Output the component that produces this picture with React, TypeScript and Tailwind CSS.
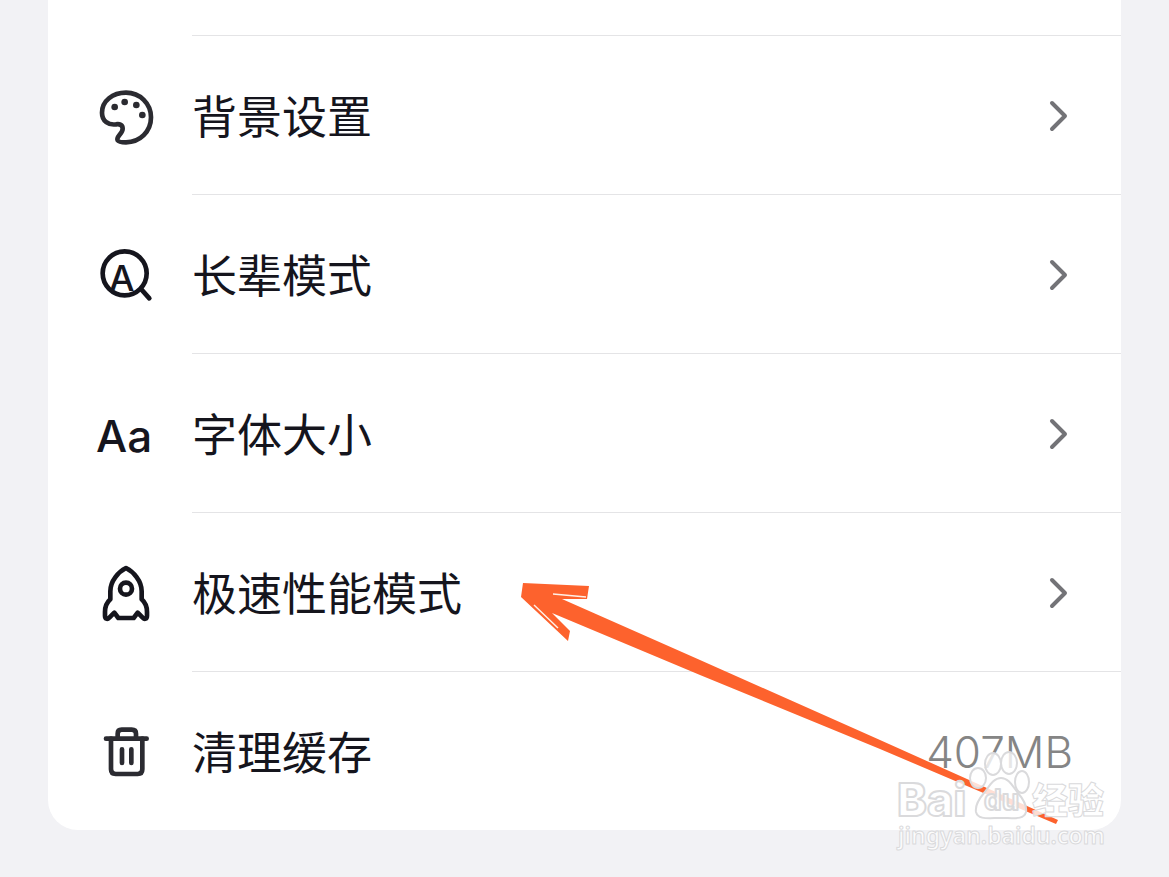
import type { ReactNode } from "react";

type SettingItem = {
  label: string;
  icon: ReactNode;
  value?: string;
};

const settings: SettingItem[] = [
  { label: "背景设置", icon: <IconPalette /> },
  { label: "长辈模式", icon: <IconElder /> },
  { label: "字体大小", icon: <IconFontSize /> },
  { label: "极速性能模式", icon: <IconRocket /> },
  { label: "清理缓存", icon: <IconTrash />, value: "407MB" },
];

export default function App() {
  return (
    <div className="min-h-screen bg-[#f2f2f5] pb-12 font-[Inter,'Noto_Sans_CJK_SC',sans-serif] text-[#15151d]">
      <main className="relative mx-12 rounded-b-[30px] bg-white pt-[35px]">
        <ul>
          {settings.map((item) => (
            <li key={item.label}>
              <SettingRow item={item} />
            </li>
          ))}
        </ul>
        <Arrow />
        <Watermark />
      </main>
    </div>
  );
}

function SettingRow({ item }: { item: SettingItem }) {
  return (
    <button
      type="button"
      className="flex w-full cursor-pointer items-center gap-9 pl-12 text-left"
    >
      {item.icon}
      <span className="flex h-[159px] grow items-center justify-between border-t border-[#e4e4e6] pt-0.5 pr-12">
        <span className="pt-1 text-[45px] leading-[60px]">{item.label}</span>
        {item.value ? (
          <span className="text-[44px] leading-[60px] font-light text-[#858585]">
            {item.value}
          </span>
        ) : (
          <IconChevron />
        )}
      </span>
    </button>
  );
}

function IconChevron() {
  return (
    <svg
      className="h-8 w-6 text-[#737377]"
      viewBox="0 0 24 32"
      fill="none"
      stroke="currentColor"
      strokeWidth={4}
      strokeLinecap="round"
      strokeLinejoin="round"
      aria-hidden="true"
    >
      <path d="M3 3 16 16 3 29" />
    </svg>
  );
}

function IconBase({ children }: { children: ReactNode }) {
  return (
    <svg
      className="size-[60px] shrink-0"
      viewBox="0 0 180 180"
      fill="none"
      stroke="currentColor"
      strokeWidth={14}
      strokeLinecap="round"
      strokeLinejoin="round"
      aria-hidden="true"
    >
      {children}
    </svg>
  );
}

function IconPalette() {
  return (
    <IconBase>
      <g stroke="#2b2b31">
        <path d="M18 83C18 48 50 23 90 23c42 0 75 33 75 74 0 43-33 75-75 75-12 0-22-1-25-6-6-11 15-20 15-35 0-11-9-15-20-13-22 3-42-9-42-35Z" />
      </g>
      <g fill="#2b2b31" stroke="none">
        <circle cx={56} cy={66} r={10} />
        <circle cx={86} cy={51} r={10} />
        <circle cx={121} cy={60} r={10} />
        <circle cx={139} cy={90} r={10} />
      </g>
    </IconBase>
  );
}

function IconElder() {
  return (
    <IconBase>
      <circle cx={86} cy={88} r={66} />
      <path d="m136 136 24 27" />
      <text
        x={77}
        y={141}
        textAnchor="middle"
        className="fill-current font-[Inter] text-[108px] font-medium"
        stroke="none"
      >
        A
      </text>
    </IconBase>
  );
}

function IconFontSize() {
  return (
    <span
      className="w-[60px] shrink-0 pt-1.5 text-[44px] leading-[60px] font-medium"
      aria-hidden="true"
    >
      Aa
    </span>
  );
}

function IconRocket() {
  return (
    <IconBase>
      <path d="M90 18C68 29 43 56 43 88v24c-9 8-16 23-16 38v11c0 10 7 12 13 6l15-15 12 16h46l12-16 15 15c6 6 13 4 13-6v-11c0-15-7-30-16-38V88c0-32-25-59-47-70Z" />
      <circle cx={90} cy={80} r={18} />
    </IconBase>
  );
}

function IconTrash() {
  return (
    <IconBase>
      <g stroke="#2b2b31">
        <path d="M30 53h122M65 53V38c0-8 5-12 12-12h30c8 0 13 4 13 12v15" />
        <path d="M45 53v92c0 9 5 14 14 14h66c9 0 14-5 14-14V53" />
        <path d="M78 85v41M106 85v41" />
      </g>
    </IconBase>
  );
}

function Arrow() {
  return (
    <svg
      className="pointer-events-none absolute right-[61px] bottom-1 h-[246px] w-[542px]"
      viewBox="0 0 542 246"
      aria-hidden="true"
    >
      <path
        fill="#fd622d"
        d="M5 3 71 6 69 19 44 19 182 80 362 160 449 199 540 240 538 244 442 203 362 169 182 95 34 33 52 51 50 61 3 17Z"
      />
      <path
        d="m35 14 33 3M16 25l24 23"
        fill="none"
        stroke="#ffefe6"
        strokeWidth={1.5}
      />
    </svg>
  );
}

function Watermark() {
  return (
    <svg
      className="pointer-events-none absolute right-3 -bottom-[22px] h-[104px] w-[216px]"
      viewBox="0 0 216 104"
      fill="#ffffffcc"
      stroke="#dadadc"
      strokeWidth={2}
      strokeLinejoin="round"
    >
      <ellipse cx={85} cy={30} rx={8} ry={10} />
      <ellipse cx={100} cy={16} rx={8} ry={11} />
      <ellipse cx={116} cy={15} rx={8} ry={11} />
      <ellipse cx={129} cy={34} rx={7} ry={11} />
      <path d="M108 30c8 0 12 9 17 15 6 7 9 13 8 19-2 8-12 6-25 6s-23 2-25-6c-1-6 2-12 8-19 5-6 9-15 17-15Z" />
      <text x={4} y={68} className="font-[Inter] text-[45px] font-extrabold">
        Bai
      </text>
      <text x={91} y={62} className="font-[Inter] text-[28px] font-bold">
        du
      </text>
      <text
        x={139}
        y={66}
        className="font-['Noto_Sans_CJK_SC'] text-[36px] font-black"
        strokeWidth={1}
      >
        经验
      </text>
      <text
        x={5}
        y={96}
        className="font-['Noto_Sans'] text-[23px] font-semibold"
        strokeWidth={1}
      >
        jingyan.baidu.com
      </text>
    </svg>
  );
}
